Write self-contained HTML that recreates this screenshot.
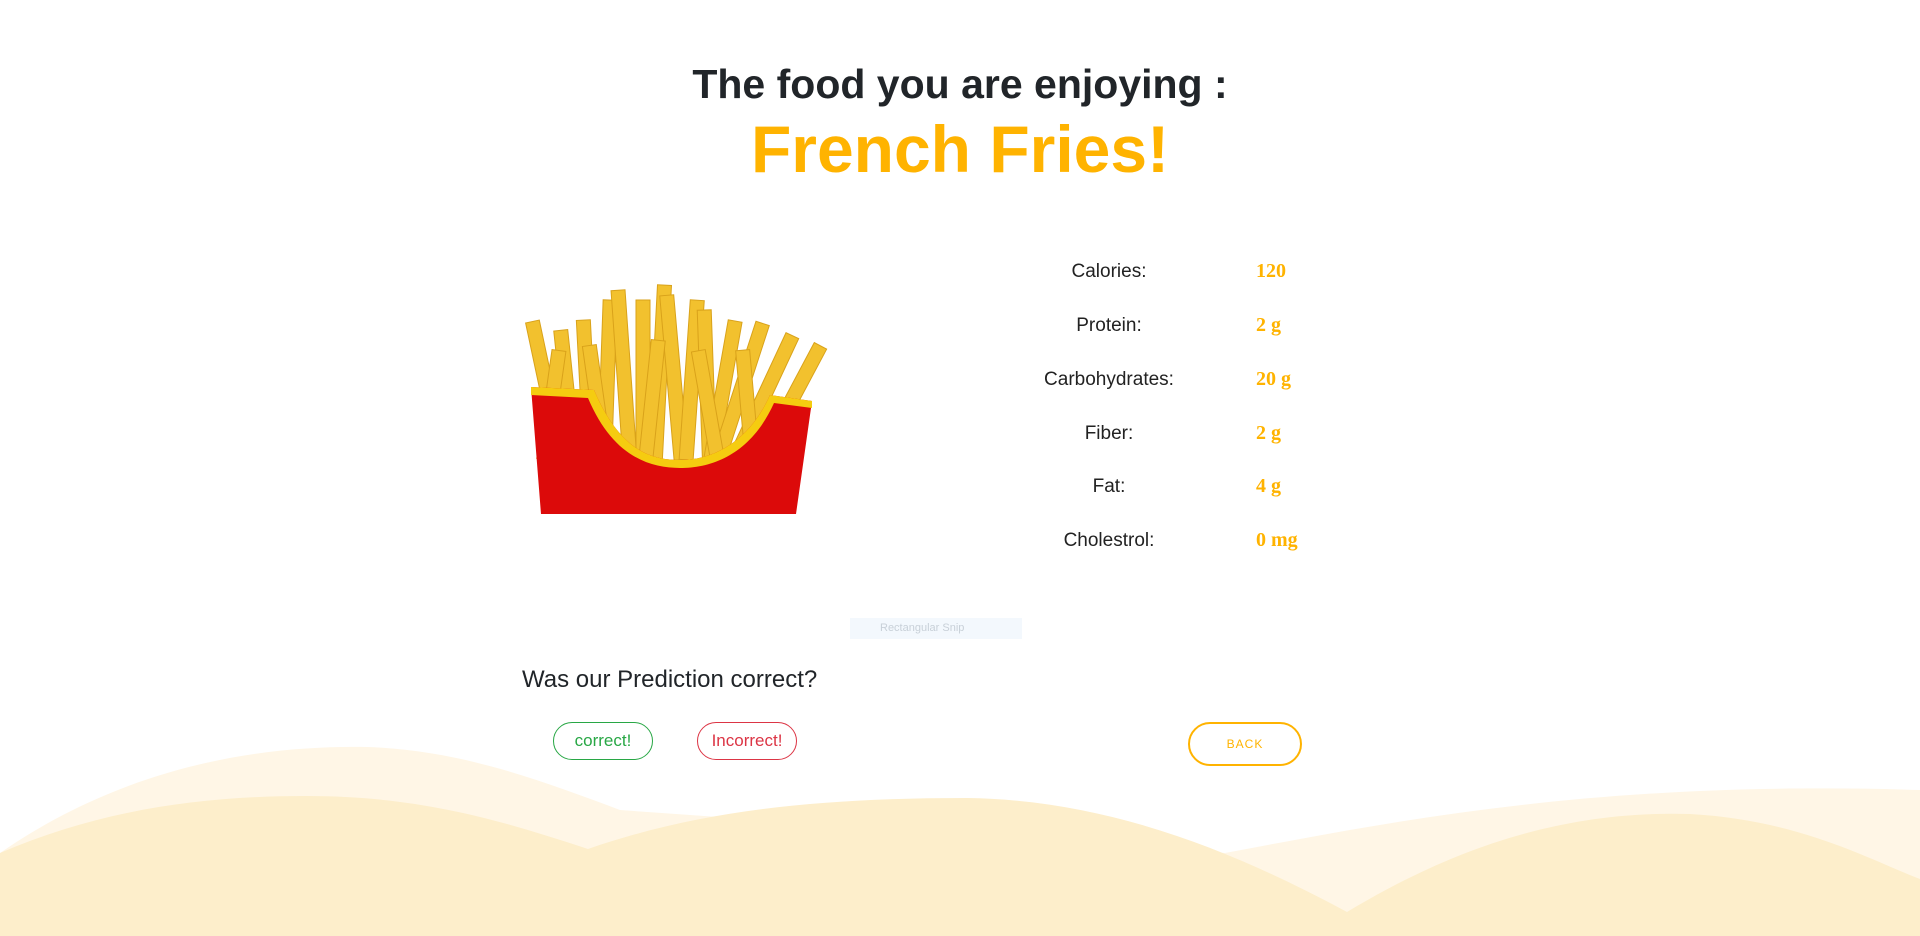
<!DOCTYPE html>
<html><head><meta charset="utf-8"><style>
body{margin:0;width:1920px;height:936px;overflow:hidden;background:#fff;font-family:"Liberation Sans",sans-serif;position:relative}
.abs{position:absolute}
h1{position:absolute;left:0;width:1920px;text-align:center;margin:0;font-weight:bold}
.lab{position:absolute;width:200px;left:1009px;text-align:center;font-size:19px;color:#222;font-weight:500}
.val{position:absolute;left:1256px;font-family:"Liberation Serif",serif;font-size:20px;color:#ffb300;font-weight:bold}
.btn{position:absolute;border-radius:20px;text-align:center;box-sizing:border-box;font-size:17px}
</style></head><body>
<svg class="abs" style="left:0;top:0" width="1920" height="936">
<path d="M0 853 C120 770 250 745 367 747 C460 750 540 780 620 810 L1225 853 C1400 820 1600 780 1920 790 L1920 936 L0 936Z" fill="#fff6e6"/>
<path d="M0 853 C100 810 200 796 306 796 C420 796 500 820 588 849 C700 810 820 798 967 798 C1120 800 1250 860 1347 912 C1450 850 1560 810 1690 814 C1800 820 1870 860 1920 879 L1920 936 L0 936Z" fill="#fdeecb"/>
<g>
<g fill="#f2c12e" stroke="#d9a21a" stroke-width="1">
<rect x="540" y="320" width="14" height="140" transform="rotate(-12 547 390)"/>
<rect x="560" y="330" width="14" height="130" transform="rotate(-6 567 390)"/>
<rect x="580" y="320" width="14" height="140" transform="rotate(-3 587 390)"/>
<rect x="600" y="300" width="14" height="160" transform="rotate(2 607 390)"/>
<rect x="618" y="290" width="14" height="170" transform="rotate(-4 625 390)"/>
<rect x="636" y="300" width="14" height="160"/>
<rect x="652" y="285" width="14" height="175" transform="rotate(3 659 390)"/>
<rect x="668" y="295" width="14" height="165" transform="rotate(-5 675 390)"/>
<rect x="684" y="300" width="14" height="160" transform="rotate(4 691 390)"/>
<rect x="700" y="310" width="14" height="150" transform="rotate(-2 707 390)"/>
<rect x="716" y="320" width="14" height="140" transform="rotate(10 723 390)"/>
<rect x="734" y="320" width="14" height="140" transform="rotate(18 741 390)"/>
<rect x="760" y="330" width="14" height="130" transform="rotate(25 767 390)"/>
<rect x="790" y="340" width="14" height="120" transform="rotate(28 797 390)"/>
<rect x="545" y="350" width="14" height="110" transform="rotate(8 552 400)"/>
<rect x="590" y="345" width="14" height="115" transform="rotate(-8 597 400)"/>
<rect x="645" y="340" width="14" height="120" transform="rotate(6 652 400)"/>
<rect x="700" y="350" width="14" height="110" transform="rotate(-10 707 400)"/>
<rect x="740" y="350" width="14" height="110" transform="rotate(-5 747 400)"/>
</g>
<path d="M531 387 L594 390 C620 450 650 460 680 460 C715 460 750 440 770 395 L812 401 L796 514 L541 514Z" fill="#dc0a0a"/>
<path d="M531 387 L594 390 C620 450 650 460 680 460 C715 460 750 440 770 395 L812 401 L812 408 L774 403 C752 452 715 468 680 468 C648 468 612 455 588 398 L531 395Z" fill="#f5cc10"/>
</g>
</svg>
<h1 style="top:61px;font-size:41px;color:#212529">The food you are enjoying :</h1>
<h1 style="top:111px;font-size:66px;color:#ffb300">French Fries!</h1>
<div class="lab" style="top:261px">Calories:</div><div class="val" style="top:260px">120</div>
<div class="lab" style="top:315px">Protein:</div><div class="val" style="top:314px">2 g</div>
<div class="lab" style="top:369px">Carbohydrates:</div><div class="val" style="top:368px">20 g</div>
<div class="lab" style="top:423px">Fiber:</div><div class="val" style="top:422px">2 g</div>
<div class="lab" style="top:476px">Fat:</div><div class="val" style="top:475px">4 g</div>
<div class="lab" style="top:530px">Cholestrol:</div><div class="val" style="top:529px">0 mg</div>
<div class="abs" style="left:850px;top:618px;width:172px;height:21px;background:#f3f8fd;color:#c8d0d8;font-size:11px;line-height:21px;padding-left:30px;box-sizing:border-box">Rectangular Snip</div>
<div class="abs" style="left:522px;top:666px;font-size:24px;color:#212529">Was our Prediction correct?</div>
<div class="btn" style="left:553px;top:722px;width:100px;height:38px;border:1px solid #28a745;color:#28a745;line-height:36px">correct!</div>
<div class="btn" style="left:697px;top:722px;width:100px;height:38px;border:1px solid #dc3545;color:#dc3545;line-height:36px">Incorrect!</div>
<div class="btn" style="left:1188px;top:722px;width:114px;height:44px;border:2px solid #ffb300;color:#ffb300;line-height:40px;font-size:12px;letter-spacing:1px;border-radius:22px">BACK</div>
</body></html>
